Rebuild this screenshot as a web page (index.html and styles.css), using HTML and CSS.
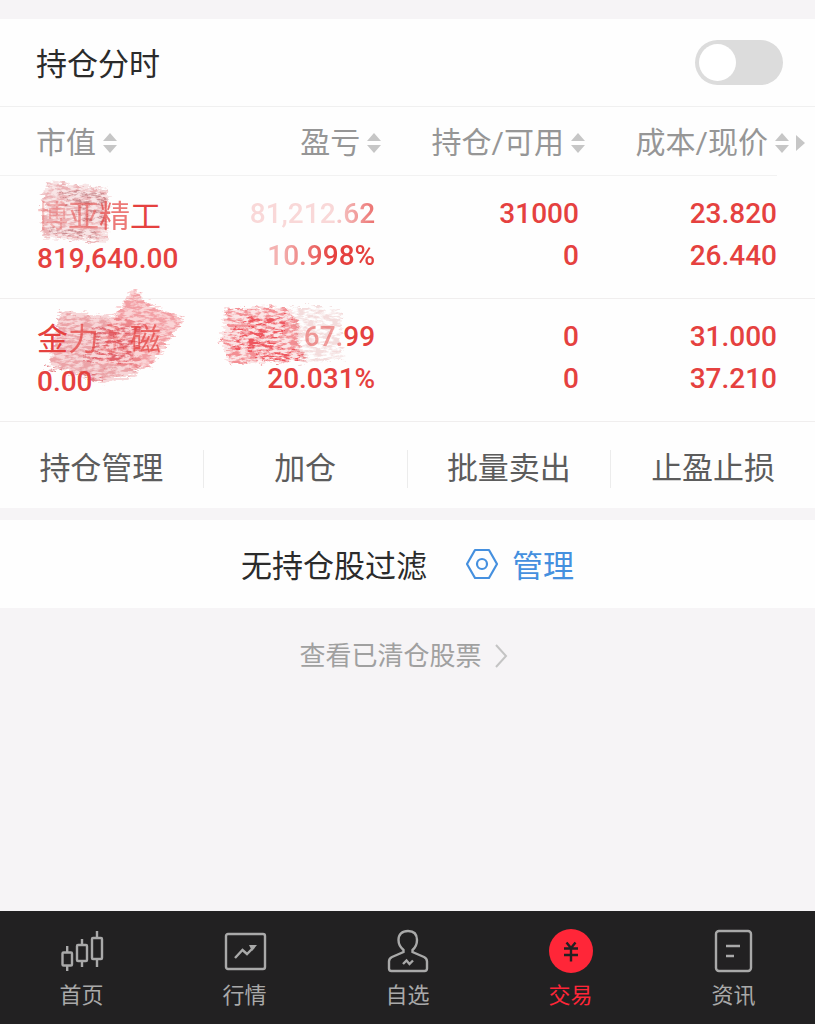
FILE: index.html
```html
<!DOCTYPE html>
<html lang="zh-CN">
<head>
  <meta charset="UTF-8" />
  <meta name="viewport" content="width=device-width, initial-scale=1.0"/>
  <title>持仓</title>
  <link rel="stylesheet" href="styles.css">
</head>
<body>

  <svg class="defs" aria-hidden="true">
    <defs>
      <!-- crayon texture -->
      <filter id="crayon" x="-10%" y="-10%" width="120%" height="120%">
        <feTurbulence type="fractalNoise" baseFrequency="0.12 0.35" numOctaves="4" seed="4" result="noise"/>
        <feDisplacementMap in="SourceGraphic" in2="noise" scale="14" xChannelSelector="R" yChannelSelector="G" result="rough"/>
        <feColorMatrix in="noise" type="matrix" values="0 0 0 0 0  0 0 0 0 0  0 0 0 0 0  0 0 0 4 -1.5" result="grain"/>
        <feComposite in="rough" in2="grain" operator="in"/>
        <feGaussianBlur stdDeviation="0.5"/>
      </filter>
      <filter id="rough" x="-10%" y="-10%" width="120%" height="120%">
        <feTurbulence type="fractalNoise" baseFrequency="0.1 0.4" numOctaves="3" seed="9"/>
        <feDisplacementMap in="SourceGraphic" scale="12" xChannelSelector="R" yChannelSelector="G"/>
      </filter>
      <path id="sort" d="M7 0L14 8H0zM0 12H14L7 20z"/>
    </defs>
  </svg>

  <main>
    <section class="panel toggle-row">
      <label for="timeline">持仓分时</label>
      <input type="checkbox" role="switch" id="timeline" class="switch">
    </section>

    <section class="panel">
      <table class="holdings">
        <thead>
          <tr>
            <th><button class="sort">市值<svg width="14" height="20"><use href="#sort"/></svg></button></th>
            <th><button class="sort">盈亏<svg width="14" height="20"><use href="#sort"/></svg></button></th>
            <th><button class="sort">持仓/可用<svg width="14" height="20"><use href="#sort"/></svg></button></th>
            <th><button class="sort">成本/现价<svg width="14" height="20"><use href="#sort"/></svg><svg class="more" width="9" height="16"><path d="M0 0L9 8L0 16z"/></svg></button></th>
          </tr>
        </thead>
        <tbody>
          <tr>
            <td>
              <svg class="scribble" width="200" height="122" aria-hidden="true">
                <g filter="url(#rough)" opacity="0.2">
                  <path fill="#e2868b" d="M46 6L108 12L107 66L44 62z"/>
                </g>
                <g filter="url(#crayon)">
                  <path fill="#dc7379" opacity="0.45" d="M46 6L108 12L107 66L42 60L42 28z"/>
                  <path fill="none" stroke="#b9787a" stroke-opacity="0.6" stroke-width="4" d="M56 17L106 19M66 25L106 27M74 34L106 36M74 42L104 44M50 55L100 58"/>
                </g>
              </svg>
              <div class="name"><span class="faint">博</span><span class="soft">亚</span><span class="worn">精</span>工</div>
              <div>819,640.00</div>
            </td>
            <td><div class="fade-long">81,212.62</div><div class="fade-short">10.998%</div></td>
            <td><div>31000</div><div>0</div></td>
            <td><div>23.820</div><div>26.440</div></td>
          </tr>
          <tr>
            <td>
              <svg class="scribble tall" width="200" height="122" aria-hidden="true">
                <g filter="url(#rough)" opacity="0.35">
                  <path fill="#eb8e93" d="M60 29L128 38L137 94L104 102L50 84z"/>
                  <path fill="#f5898e" d="M134 8L150 24L184 38L148 88L98 82L108 44z"/>
                </g>
                <g filter="url(#crayon)">
                  <path fill="#dc656c" opacity="0.45" d="M60 29L86 36L140 40L140 90L108 98L50 84z"/>
                  <path fill="#ec6970" opacity="0.5" d="M134 8L150 24L184 38L148 88L98 82L108 44z"/>
                  <path fill="#d8545c" opacity="0.7" d="M46 84L104 96L102 102L46 86z"/>
                  <path fill="none" stroke="#dc4f57" stroke-opacity="0.6" stroke-width="8" d="M92 52L146 48M96 64L140 62M84 76L134 76"/>
                </g>
              </svg>
              <div class="name">金<span class="worn">力</span><span class="faint">永</span><span class="worn">磁</span></div>
              <div>0.00</div>
            </td>
            <td>
              <svg class="scribble profit" width="160" height="74" aria-hidden="true">
                <g filter="url(#rough)" opacity="0.2">
                  <path fill="#f3868b" d="M18 10L80 8L88 18L96 28L92 46L100 62L22 64L14 42z"/>
                </g>
                <g filter="url(#crayon)">
                  <path fill="#ee5f67" opacity="0.65" d="M18 10L80 8L84 18L96 24L90 36L94 48L100 62L22 64L18 46L12 42L24 28z"/>
                  <path fill="none" stroke="#ed3f49" stroke-opacity="0.7" stroke-width="8" d="M38 22H80M28 34H78M26 46H72M50 57H94"/>
                  <path fill="#d98d8d" opacity="0.3" d="M84 8H132L136 28L132 44L138 60L94 64z"/>
                </g>
              </svg>
              <div><span class="soft">67.</span>99</div>
              <div>20.031%</div>
            </td>
            <td><div>0</div><div>0</div></td>
            <td><div>31.000</div><div>37.210</div></td>
          </tr>
        </tbody>
      </table>

      <div class="actions">
        <button>持仓管理</button>
        <button>加仓</button>
        <button>批量卖出</button>
        <button>止盈止损</button>
      </div>
    </section>

    <section class="panel filter">
      <span>无持仓股过滤</span>
      <a href="#manage">
        <svg width="34" height="32" fill="none" stroke="currentColor" stroke-width="2.2">
          <path d="M10 2H24L32 16L24 30H10L2 16z" stroke-linejoin="round"/>
          <circle cx="17" cy="16" r="5"/>
        </svg>
        <span>管理</span>
      </a>
    </section>

    <a class="closed" href="#closed">查看已清仓股票<svg width="13" height="24" fill="none" stroke="#c4c4c4" stroke-width="2"><path d="M1 1L11 12L1 23"/></svg></a>
  </main>

  <nav class="tabs">
    <a href="#home">
      <svg width="44" height="44">
        <rect x="2.5" y="23.5" width="9.5" height="13" rx="1"/>
        <rect x="17" y="16" width="10" height="16" rx="1"/>
        <rect x="32" y="9" width="10" height="21" rx="1"/>
        <path d="M7.200 17V23M7.200 37V42M22 10V16M22 32V38M37 2V9M37 30V38"/>
      </svg>
      首页
    </a>
    <a href="#market">
      <svg width="44" height="44">
        <rect x="3" y="5" width="39" height="35" rx="2"/>
        <path d="M12 29L19.500 21L24 25L31 18"/>
        <path class="tip" d="M26 16H34L29 22z"/>
      </svg>
      行情
    </a>
    <a href="#watch">
      <svg width="44" height="44">
        <path d="M17.500 21C14 18 12.500 15 12.500 11C12.500 5.500 16 2 22 2S31 5.500 31 11C31 15 30 18 26.500 21V23L38 28C40 29 41 30.500 41 32.500V39.500Q41 42 38.500 42H5.500Q3 42 3 39.500V32.500C3 30.500 4 29 6 28L17.500 23z"/>
        <path d="M17 35L20.500 31.500L23.500 35L27 31.500"/>
      </svg>
      自选
    </a>
    <a href="#trade" class="active">
      <svg width="44" height="44">
        <circle cx="22" cy="22" r="22"/>
        <path d="M17.500 13.500L22 19L26.500 13.500M15 19.500H29M15 26H29M22 19V32.500"/>
      </svg>
      交易
    </a>
    <a href="#news">
      <svg width="44" height="44">
        <rect x="4" y="2" width="35" height="40" rx="3"/>
        <path d="M14 17H28M14 27H22"/>
      </svg>
      资讯
    </a>
  </nav>

</body>
</html>
```

FILE: styles.css
```css
* {
  box-sizing: border-box;
}
body {
  display: flex;
  flex-direction: column;
  min-height: 100vh;
  margin: 0;
  background: #f6f4f6;
  color: #2b2b2b;
  font-family: Roboto, "Noto Sans CJK SC", sans-serif;
  font-size: 31px;
  line-height: 42px;
}
main {
  flex: 1;
  padding-top: 19px;
}
button {
  padding: 0;
  border: 0;
  background: none;
  color: inherit;
  font: inherit;
}
a {
  color: inherit;
  text-decoration: none;
}
.defs {
  position: absolute;
  width: 0;
  height: 0;
}
.panel {
  background: #fefefe;
}

.toggle-row {
  display: flex;
  align-items: center;
  justify-content: space-between;
  height: 88px;
  padding: 0 32px 0 36px;
  border-bottom: 1px solid #f0f0f0;
}
.toggle-row label {
  padding-top: 4px;
}
.switch {
  appearance: none;
  width: 88px;
  height: 45px;
  margin: 0;
  padding: 4px;
  border-radius: 23px;
  background: #dcdcdc;
}
.switch::before {
  content: "";
  display: block;
  width: 37px;
  height: 37px;
  border-radius: 50%;
  background: #fff;
}
.switch:checked::before {
  margin-left: auto;
}

.holdings {
  width: 100%;
  border-collapse: collapse;
  table-layout: fixed;
}
.holdings thead tr {
  background: linear-gradient(#f2f2f2, #f2f2f2) no-repeat left bottom / calc(100% - 38px) 1px;
}
.holdings th {
  height: 69px;
  padding: 2px 10px 0 0;
  color: #969696;
  font-size: 30px;
  font-weight: 400;
  text-align: right;
}
.holdings th:nth-child(1) {
  width: 25%;
  padding-left: 36px;
  text-align: left;
}
.holdings th:nth-child(2) {
  width: 23%;
}
.holdings th:nth-child(3) {
  width: 25%;
}
.sort {
  display: inline-flex;
  align-items: center;
  gap: 7px;
  white-space: nowrap;
}
.sort svg {
  fill: #c6c6c6;
}
.holdings td {
  position: relative;
  padding: 17px 16px 21px 0;
  border-bottom: 1px solid #f0eeee;
  color: #e5413f;
  font-size: 28px;
  font-weight: 500;
  text-align: right;
  vertical-align: top;
}
.holdings td div {
  position: relative;
}
.holdings td:first-child {
  padding: 20px 0 18px 37px;
  text-align: left;
}
.holdings td:last-child {
  padding-right: 38px;
}
.holdings .name {
  font-size: 31px;
  font-weight: 400;
}
.faint {
  opacity: 0.3;
}
.soft {
  opacity: 0.5;
}
.worn {
  opacity: 0.7;
}
.fade-long {
  mask-image: linear-gradient(to right, rgba(0, 0, 0, 0.2) 75%, rgba(0, 0, 0, 0.75));
}
.fade-short {
  mask-image: linear-gradient(to right, rgba(0, 0, 0, 0.4) 45%, #000 75%);
}
.scribble {
  position: absolute;
  top: 0;
  left: 0;
  pointer-events: none;
}
.scribble.tall {
  top: -18px;
}
.scribble.profit {
  right: 24px;
  left: auto;
}

.actions {
  display: grid;
  grid-template-columns: repeat(4, 1fr);
  padding: 28px 0 20px;
  color: #5c5c5c;
}
.actions button {
  height: 38px;
  border-right: 1px solid #ececec;
  line-height: 38px;
}
.actions button:last-child {
  border-right: 0;
}

.filter {
  display: flex;
  align-items: center;
  justify-content: center;
  gap: 38px;
  height: 88px;
  margin-top: 12px;
}
.filter a {
  display: flex;
  align-items: center;
  gap: 13px;
  color: #4590df;
}
.filter span {
  padding-top: 5px;
}
.closed {
  display: flex;
  align-items: center;
  justify-content: center;
  gap: 13px;
  margin-top: 27px;
  padding-right: 8px;
  color: #a0a0a0;
  font-size: 26px;
}

.tabs {
  display: grid;
  grid-template-columns: repeat(5, 1fr);
  height: 113px;
  padding-top: 18px;
  background: #222122;
  color: #a9a9a9;
  font-size: 22px;
  line-height: 32px;
}
.tabs a {
  display: flex;
  flex-direction: column;
  align-items: center;
  gap: 7px;
}
.tabs svg {
  fill: none;
  stroke: currentColor;
  stroke-width: 2.4;
}
.tabs .tip {
  fill: currentColor;
  stroke: none;
}
.tabs .active {
  color: #ff2638;
}
.active circle {
  fill: currentColor;
  stroke: none;
}
.active path {
  stroke: #222122;
}
```
